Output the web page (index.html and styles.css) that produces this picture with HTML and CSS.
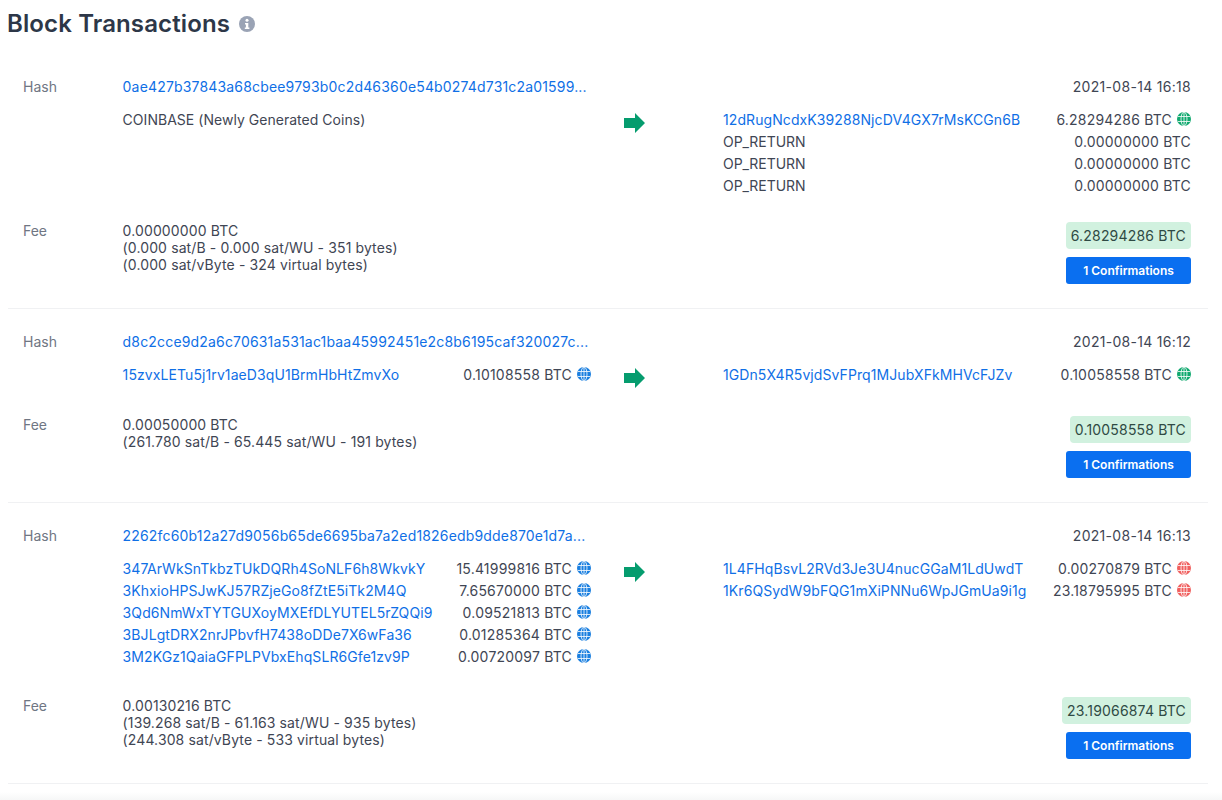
FILE: index.html
```html
<!DOCTYPE html>
<html lang="en">
<head>
<meta charset="utf-8">
<title>Block Transactions</title>
<link rel="stylesheet" href="styles.css">
</head>
<body>
<svg class="defs" width="0" height="0" aria-hidden="true">
  <symbol id="globe" viewBox="0 0 14 14">
    <circle cx="7" cy="7" r="7" fill="currentColor"/>
    <g fill="none" stroke="#fff" stroke-width="0.8">
      <ellipse cx="7" cy="7" rx="3" ry="7"/>
      <path d="M7 0v14M.8 4.500h12.400M.8 9.500h12.400"/>
    </g>
  </symbol>
</svg>
<div class="page">
  <h1 class="title">Block Transactions
    <svg class="info" viewBox="0 0 16 16" aria-hidden="true"><circle cx="8" cy="8" r="8" fill="#9aa3b5"/><circle cx="8" cy="4.300" r="1.500" fill="#fff"/><path d="M6 7h3.300v4.600H10.400v1.500H5.800v-1.500h1.100V8.500H6z" fill="#fff"/></svg>
  </h1>

  <section class="tx tx-first">
    <div class="line">
      <div class="label">Hash</div>
      <a class="hash" href="#">0ae427b37843a68cbee9793b0c2d46360e54b0274d731c2a01599...</a>
      <div class="time">2021-08-14 16:18</div>
    </div>
    <div class="flow">
      <div class="side inputs">
        <div class="row"><span class="plain">COINBASE (Newly Generated Coins)</span></div>
      </div>
      <div class="arrow"><svg viewBox="0 0 21 20" aria-hidden="true"><path d="M0 5h11V0l10 10-10 10v-5H0z"/></svg></div>
      <div class="side outputs">
        <div class="row"><a class="addr" href="#">12dRugNcdxK39288NjcDV4GX7rMsKCGn6B</a><span class="amt">6.28294286 BTC <svg class="globe green"><use href="#globe"/></svg></span></div>
        <div class="row"><span class="op">OP_RETURN</span><span class="amt">0.00000000 BTC</span></div>
        <div class="row"><span class="op">OP_RETURN</span><span class="amt">0.00000000 BTC</span></div>
        <div class="row"><span class="op">OP_RETURN</span><span class="amt">0.00000000 BTC</span></div>
      </div>
    </div>
    <div class="foot">
      <div class="label">Fee</div>
      <div class="fee">0.00000000 BTC<br>(0.000 sat/B - 0.000 sat/WU - 351 bytes)<br>(0.000 sat/vByte - 324 virtual bytes)</div>
      <div class="totals"><span class="total">6.28294286 BTC</span><button class="conf">1 Confirmations</button></div>
    </div>
  </section>

  <section class="tx">
    <div class="line">
      <div class="label">Hash</div>
      <a class="hash" href="#">d8c2cce9d2a6c70631a531ac1baa45992451e2c8b6195caf320027c...</a>
      <div class="time">2021-08-14 16:12</div>
    </div>
    <div class="flow">
      <div class="side inputs">
        <div class="row"><a class="addr" href="#">15zvxLETu5j1rv1aeD3qU1BrmHbHtZmvXo</a><span class="amt">0.10108558 BTC <svg class="globe blue"><use href="#globe"/></svg></span></div>
      </div>
      <div class="arrow"><svg viewBox="0 0 21 20" aria-hidden="true"><path d="M0 5h11V0l10 10-10 10v-5H0z"/></svg></div>
      <div class="side outputs">
        <div class="row"><a class="addr" href="#">1GDn5X4R5vjdSvFPrq1MJubXFkMHVcFJZv</a><span class="amt">0.10058558 BTC <svg class="globe green"><use href="#globe"/></svg></span></div>
      </div>
    </div>
    <div class="foot">
      <div class="label">Fee</div>
      <div class="fee">0.00050000 BTC<br>(261.780 sat/B - 65.445 sat/WU - 191 bytes)</div>
      <div class="totals"><span class="total">0.10058558 BTC</span><button class="conf">1 Confirmations</button></div>
    </div>
  </section>

  <section class="tx tx-multi">
    <div class="line">
      <div class="label">Hash</div>
      <a class="hash" href="#">2262fc60b12a27d9056b65de6695ba7a2ed1826edb9dde870e1d7a...</a>
      <div class="time">2021-08-14 16:13</div>
    </div>
    <div class="flow">
      <div class="side inputs">
        <div class="row"><a class="addr" href="#">347ArWkSnTkbzTUkDQRh4SoNLF6h8WkvkY</a><span class="amt">15.41999816 BTC <svg class="globe blue"><use href="#globe"/></svg></span></div>
        <div class="row"><a class="addr" href="#">3KhxioHPSJwKJ57RZjeGo8fZtE5iTk2M4Q</a><span class="amt">7.65670000 BTC <svg class="globe blue"><use href="#globe"/></svg></span></div>
        <div class="row"><a class="addr" href="#">3Qd6NmWxTYTGUXoyMXEfDLYUTEL5rZQQi9</a><span class="amt">0.09521813 BTC <svg class="globe blue"><use href="#globe"/></svg></span></div>
        <div class="row"><a class="addr" href="#">3BJLgtDRX2nrJPbvfH7438oDDe7X6wFa36</a><span class="amt">0.01285364 BTC <svg class="globe blue"><use href="#globe"/></svg></span></div>
        <div class="row"><a class="addr" href="#">3M2KGz1QaiaGFPLPVbxEhqSLR6Gfe1zv9P</a><span class="amt">0.00720097 BTC <svg class="globe blue"><use href="#globe"/></svg></span></div>
      </div>
      <div class="arrow"><svg viewBox="0 0 21 20" aria-hidden="true"><path d="M0 5h11V0l10 10-10 10v-5H0z"/></svg></div>
      <div class="side outputs">
        <div class="row"><a class="addr" href="#">1L4FHqBsvL2RVd3Je3U4nucGGaM1LdUwdT</a><span class="amt">0.00270879 BTC <svg class="globe red"><use href="#globe"/></svg></span></div>
        <div class="row"><a class="addr" href="#">1Kr6QSydW9bFQG1mXiPNNu6WpJGmUa9i1g</a><span class="amt">23.18795995 BTC <svg class="globe red"><use href="#globe"/></svg></span></div>
      </div>
    </div>
    <div class="foot">
      <div class="label">Fee</div>
      <div class="fee">0.00130216 BTC<br>(139.268 sat/B - 61.163 sat/WU - 935 bytes)<br>(244.308 sat/vByte - 533 virtual bytes)</div>
      <div class="totals"><span class="total">23.19066874 BTC</span><button class="conf">1 Confirmations</button></div>
    </div>
  </section>
</div>
<div class="fade"></div>
</body>
</html>
```
FILE: styles.css
```css
* { box-sizing: border-box; }
html, body { margin: 0; background: #fff; }
body { font-family: Inter, "Liberation Sans", sans-serif; font-size: 14px; line-height: 22px; color: #3f4654; overflow: hidden; height: 800px; position: relative; }
.defs { position: absolute; }
.page { width: 1208px; padding-left: 8px; }
.title { margin: 0 0 0 -1px; padding-top: 8px; height: 53px; font-size: 24px; line-height: 32px; font-weight: 600; letter-spacing: 0.12px; color: #2d3748; display: flex; align-items: flex-start; gap: 9px; }
.info { width: 16px; height: 16px; margin-top: 8px; }
.tx { padding: 22px 17px 24px 15px; border-bottom: 1px solid #f0f1f3; }
.tx-first { padding-top: 23px; }
.line { display: flex; height: 22px; margin-bottom: 11px; }
.label { width: 99.600px; flex: none; color: #6f7683; }
.foot .label { line-height: 17px; }
.hash { flex: 1; letter-spacing: 0.17px; }
.addr { letter-spacing: 0.09px; }
.plain { letter-spacing: 0.03px; }
.op { letter-spacing: -0.05px; }
.time { text-align: right; letter-spacing: 0.3px; }
a { color: #0f6fe6; text-decoration: none; }
.flow { display: flex; align-items: flex-start; }
.side { flex: none; }
.inputs { margin-left: 99.600px; width: 468.400px; }
.outputs { width: 468px; }
.arrow { width: 132px; padding-left: 33px; height: 22px; }
.arrow svg { display: block; width: 21px; height: 20px; fill: #059c6e; margin-top: 4px; }
.row { display: flex; justify-content: space-between; height: 22px; white-space: nowrap; }
.amt { display: inline-flex; align-items: center; gap: 5px; letter-spacing: 0.2px; }
.globe { width: 14px; height: 14px; margin-top: -3px; }
.blue { color: #1a7fe0; }
.green { color: #10a96f; }
.red { color: #f0605f; }
.foot { display: flex; margin-top: 30px; align-items: flex-start; }
.tx-first .foot { margin-top: 25px; }
.tx-multi .foot { margin-top: 29px; }
.fee { flex: 1; line-height: 17px; letter-spacing: 0.12px; }
.totals { display: flex; flex-direction: column; align-items: flex-end; gap: 8px; }
.total { background: #d1f1df; color: #2f4a44; border-radius: 4px; height: 27px; line-height: 27px; padding: 0 5px; letter-spacing: 0.18px; }
.conf { width: 125px; height: 27px; border: 0; border-radius: 3px; background: #0a6ff0; color: #fff; font: 600 12px/27px Inter, "Liberation Sans", sans-serif; padding: 0; }
.fade { position: absolute; left: 0; right: 0; bottom: 0; height: 8px; background: linear-gradient(#fff, #f6f7f7); }
```
